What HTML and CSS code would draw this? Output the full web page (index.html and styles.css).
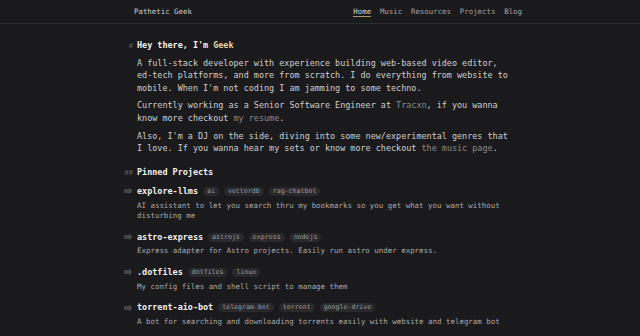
FILE: index.html
```html
<!DOCTYPE html>
<html lang="en">
<head>
    <meta charset="UTF-8">
    <meta name="viewport" content="width=device-width, initial-scale=1.0">
    <title>Pathetic Geek</title>
    <link rel="stylesheet" href="styles.css">
</head>
<body>
    <header class="site_header">
        <div class="header_inner">
            <a class="logo" href="#">Pathetic Geek</a>
            <nav class="nav">
                <a class="active" href="#">Home</a>
                <a href="#">Music</a>
                <a href="#">Resources</a>
                <a href="#">Projects</a>
                <a href="#">Blog</a>
            </nav>
        </div>
    </header>

    <main class="content">
        <h1 class="heading"><span class="mark">#</span>Hey there, I'm <span class="accent">Geek</span></h1>
        <p>A full-stack developer with experience building web-based video editor, ed-tech platforms, and more from scratch. I do everything from website to mobile. When I'm not coding I am jamming to some techno.</p>
        <p>Currently working as a Senior Software Engineer at <a class="link" href="#">Tracxn</a>, if you wanna know more checkout <a class="link" href="#">my resume</a>.</p>
        <p>Also, I'm a DJ on the side, diving into some new/experimental genres that I love. If you wanna hear my sets or know more checkout <a class="link" href="#">the music page</a>.</p>

        <h2 class="heading sub"><span class="mark">##</span>Pinned Projects</h2>

        <div class="project">
            <div class="project_title">
                <svg class="arrow" width="9" height="6" viewBox="0 0 9 6"><path d="M0 2h6.5M0 4h6.5M5 0.6l2.6 2.4-2.6 2.4" fill="none" stroke="#6c6c70" stroke-width="1"/></svg>
                <span class="project_name">explore-llms</span>
                <span class="tag">ai</span>
                <span class="tag">vectordb</span>
                <span class="tag">rag-chatbot</span>
            </div>
            <p class="desc">AI assistant to let you search thru my bookmarks so you get what you want without disturbing me</p>
        </div>

        <div class="project">
            <div class="project_title">
                <svg class="arrow" width="9" height="6" viewBox="0 0 9 6"><path d="M0 2h6.5M0 4h6.5M5 0.6l2.6 2.4-2.6 2.4" fill="none" stroke="#6c6c70" stroke-width="1"/></svg>
                <span class="project_name">astro-express</span>
                <span class="tag">astrojs</span>
                <span class="tag">express</span>
                <span class="tag">nodejs</span>
            </div>
            <p class="desc">Express adapter for Astro projects. Easily run astro under express.</p>
        </div>

        <div class="project">
            <div class="project_title">
                <svg class="arrow" width="9" height="6" viewBox="0 0 9 6"><path d="M0 2h6.5M0 4h6.5M5 0.6l2.6 2.4-2.6 2.4" fill="none" stroke="#6c6c70" stroke-width="1"/></svg>
                <span class="project_name">.dotfiles</span>
                <span class="tag">dotfiles</span>
                <span class="tag">linux</span>
            </div>
            <p class="desc">My config files and shell script to manage them</p>
        </div>

        <div class="project">
            <div class="project_title">
                <svg class="arrow" width="9" height="6" viewBox="0 0 9 6"><path d="M0 2h6.5M0 4h6.5M5 0.6l2.6 2.4-2.6 2.4" fill="none" stroke="#6c6c70" stroke-width="1"/></svg>
                <span class="project_name">torrent-aio-bot</span>
                <span class="tag">telegram-bot</span>
                <span class="tag">torrent</span>
                <span class="tag">google-drive</span>
            </div>
            <p class="desc">A bot for searching and downloading torrents easily with website and telegram bot</p>
        </div>

        <div class="project">
            <div class="project_title">
                <svg class="arrow" width="9" height="6" viewBox="0 0 9 6"><path d="M0 2h6.5M0 4h6.5M5 0.6l2.6 2.4-2.6 2.4" fill="none" stroke="#6c6c70" stroke-width="1"/></svg>
                <span class="project_name">$hell-scripts</span>
                <span class="tag">bash</span>
                <span class="tag">automation</span>
            </div>
            <p class="desc">Handy scripts I use every day</p>
        </div>
    </main>
</body>
</html>
```

FILE: styles.css
```css
body{
    margin:0;
    background:#1a1a1c;
    color:#cfcfcf;
    font-family:"DejaVu Sans Mono", "Liberation Mono", monospace;
}
a{
    text-decoration:none;
}
.site_header{
    height:23px;
    border-bottom:1px solid #2c2c2f;
}
.header_inner{
    display:flex;
    align-items:center;
    justify-content:space-between;
    height:100%;
    padding:0 118px 0 134px;
    font-size:7.4px;
}
.logo{
    color:#cfcfcf;
}
.nav{
    display:flex;
    align-items:center;
    gap:8.8px;
}
.nav a{
    color:#a2a2a4;
    line-height:9px;
}
.nav a.active{
    color:#d6d6d6;
    border-bottom:1px solid #a8976a;
}
.content{
    width:74ch;
    margin-left:137px;
    padding-top:14.5px;
    font-size:8.45px;
    line-height:12.7px;
}
.heading{
    display:flex;
    align-items:baseline;
    margin:0 0 4px;
    font-size:8.45px;
    line-height:13px;
    font-weight:bold;
    color:#f2f2f2;
}
.heading.sub{
    margin:10.7px 0 5px;
}
.mark{
    width:14px;
    margin-left:-14px;
    padding-right:4px;
    box-sizing:border-box;
    text-align:right;
    font-size:7px;
    font-weight:normal;
    color:#5e5e62;
}
.accent{
    color:#e6d7a0;
    margin-left:0.6em;
}
.content p{
    margin:0 0 4.8px;
}
.link{
    color:#8a8a8c;
}
.project{
    margin-bottom:9px;
}
.project_title{
    display:flex;
    align-items:center;
    gap:5px;
    height:13px;
}
.arrow{
    margin-left:-13px;
    margin-right:-1px;
}
.project_name{
    font-weight:bold;
    color:#f2f2f2;
}
.tag{
    font-size:6.6px;
    line-height:9px;
    padding:0 4px;
    border-radius:5px;
    background:#29292c;
    color:#9c9c9e;
}
.content p.desc{
    margin:2.8px 0 0;
    font-size:7.45px;
    line-height:10.5px;
    color:#a8a8aa;
}
```
